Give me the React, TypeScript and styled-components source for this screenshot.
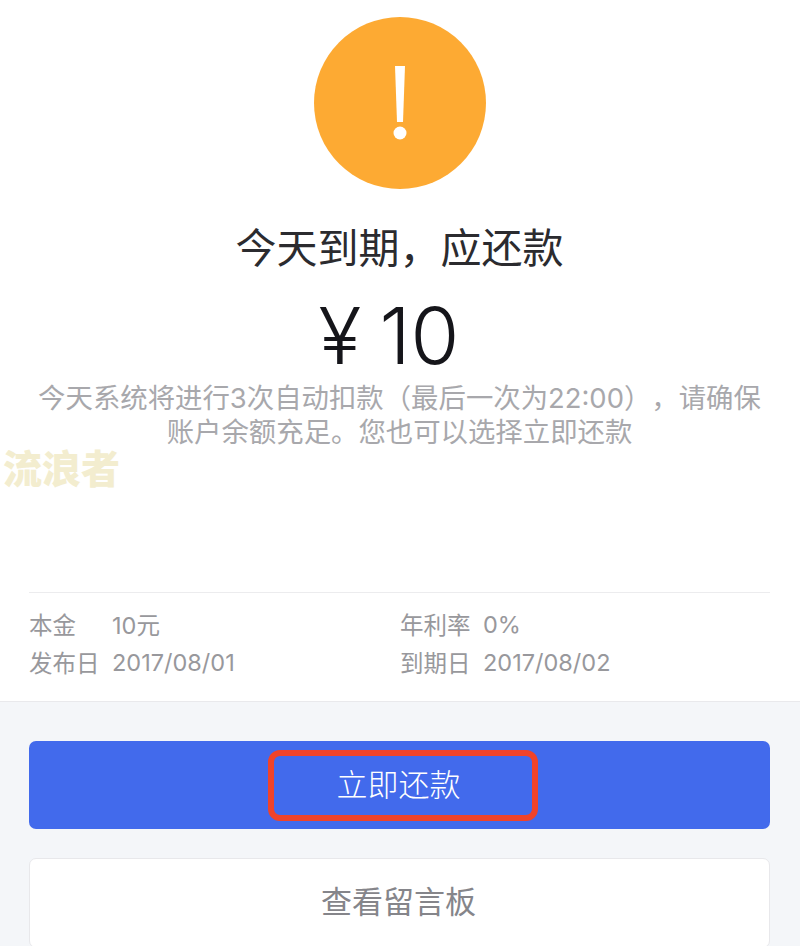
import React from 'react';
import styled, { createGlobalStyle } from 'styled-components';

const GlobalStyle = createGlobalStyle`
  html, body {
    margin: 0;
    padding: 0;
    background: #f4f6f9;
    overflow: hidden;
  }
  body {
    font-family: "Inter", "Noto Sans CJK SC", sans-serif;
    text-spacing-trim: space-all;
  }
`;

const Page = styled.div`
  position: relative;
  width: 800px;
  height: 946px;
  overflow: hidden;
  background: #f4f6f9;
`;

const Summary = styled.section`
  box-sizing: border-box;
  height: 702px;
  background: #fff;
  border-bottom: 1px solid #e9e9ec;
  padding: 17px 30px 0 29px;
  display: flex;
  flex-direction: column;
  align-items: center;
`;

const AlertIcon = styled.svg`
  width: 172px;
  height: 172px;
  display: block;
  flex: none;
`;

const Title = styled.h1`
  margin: 31px 0 0;
  font-size: 41px;
  line-height: 56px;
  font-weight: 400;
  color: #2b2b2f;
  white-space: nowrap;
`;

const Amount = styled.div`
  margin-top: 13px;
  padding-right: 21px;
  font-size: 79px;
  line-height: 92px;
  font-weight: 350;
  word-spacing: -4px;
  color: #15151a;
  white-space: nowrap;
`;

const Notice = styled.p`
  margin: 0;
  width: 740px;
  font-size: 27.4px;
  line-height: 34px;
  font-weight: 400;
  color: #a8a8ac;
  text-align: center;
`;

const Details = styled.div`
  margin-top: 143px;
  align-self: stretch;
  border-top: 1px solid #ececee;
  padding-top: 12px;
  display: grid;
  grid-template-columns: 371px 1fr;
  grid-auto-rows: 38px;
`;

const Detail = styled.div`
  display: flex;
  align-items: center;
  font-size: 23.5px;
  font-weight: 400;
  color: #98989c;
  white-space: nowrap;
`;

const DetailLabel = styled.span`
  width: 83px;
  flex: none;
`;

const Actions = styled.div`
  padding: 39px 30px 0 29px;
  display: flex;
  flex-direction: column;
  gap: 29px;
`;

const PrimaryButton = styled.button`
  position: relative;
  height: 88px;
  padding: 0 2px 5px 0;
  border: 0;
  border-radius: 7px;
  background: #426aec;
  font-family: inherit;
  font-size: 31px;
  font-weight: 300;
  color: #fff;
`;

const Highlight = styled.span`
  position: absolute;
  left: 239px;
  top: 9px;
  width: 270px;
  height: 71px;
  box-sizing: border-box;
  border: 6px solid #f0432a;
  border-radius: 12px;
`;

const SecondaryButton = styled.button`
  height: 90px;
  padding: 0 2px 7px 0;
  border: 1px solid #e8e8eb;
  border-radius: 7px;
  background: #fff;
  font-family: inherit;
  font-size: 31px;
  font-weight: 400;
  color: #85858a;
`;

const Watermark = styled.div`
  position: absolute;
  left: 3px;
  top: 446px;
  font-size: 39px;
  line-height: 46px;
  font-weight: 900;
  color: #f3edcf;
  white-space: nowrap;
`;

export default function App() {
  return (
    <Page>
      <GlobalStyle />
      <Summary>
        <AlertIcon viewBox="0 0 172 172" aria-hidden="true">
          <circle cx="86" cy="86" r="86" fill="#fdaa33" />
          <path d="M81 49h10l-2 56h-6z" fill="#fff" />
          <circle cx="86" cy="116" r="6.500" fill="#fff" />
        </AlertIcon>
        <Title>今天到期，应还款</Title>
        <Amount>¥ 10</Amount>
        <Notice>今天系统将进行3次自动扣款（最后一次为22:00），请确保账户余额充足。您也可以选择立即还款</Notice>
        <Details>
          <Detail><DetailLabel>本金</DetailLabel>10元</Detail>
          <Detail><DetailLabel>年利率</DetailLabel>0%</Detail>
          <Detail><DetailLabel>发布日</DetailLabel>2017/08/01</Detail>
          <Detail><DetailLabel>到期日</DetailLabel>2017/08/02</Detail>
        </Details>
      </Summary>
      <Actions>
        <PrimaryButton>立即还款<Highlight /></PrimaryButton>
        <SecondaryButton>查看留言板</SecondaryButton>
      </Actions>
      <Watermark>流浪者</Watermark>
    </Page>
  );
}
